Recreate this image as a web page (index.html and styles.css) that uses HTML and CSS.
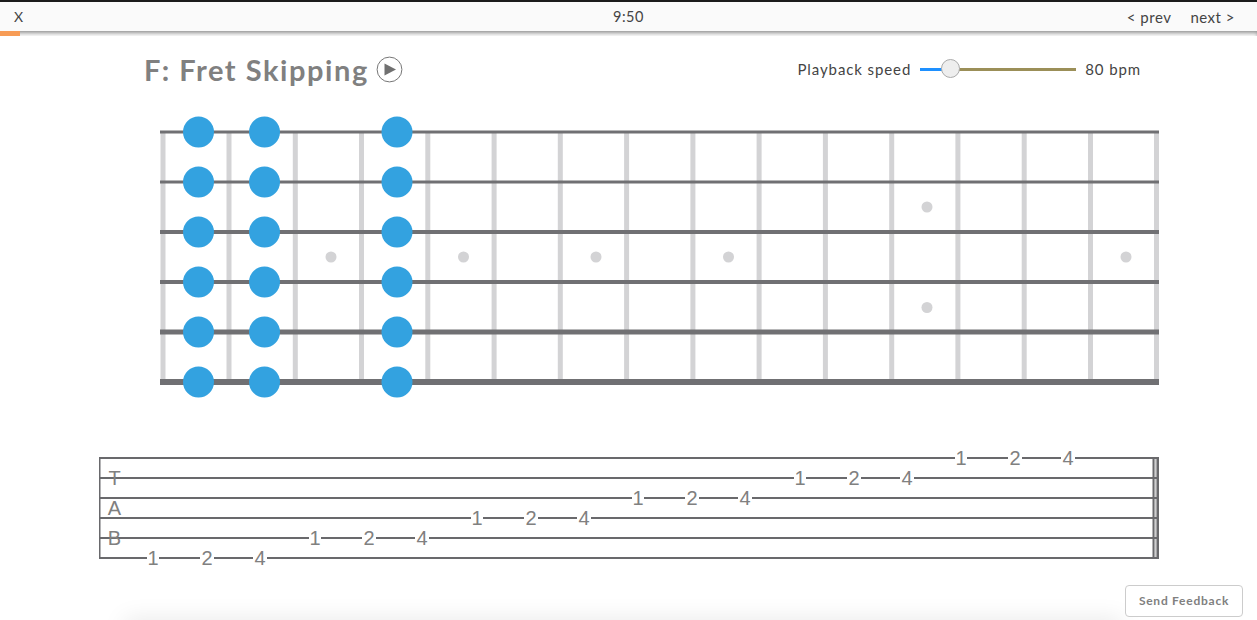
FILE: index.html
```html
<!DOCTYPE html>
<html lang="en">
<head>
  <meta charset="UTF-8">
  <title>F: Fret Skipping</title>
  <link rel="stylesheet" href="styles.css">
</head>
<body>

  <div class="topbar">
    <a class="close">X</a>
    <span class="clock">9:50</span>
    <nav class="pager"><a>&lt; prev</a><a>next &gt;</a></nav>
  </div>
  <div class="progress"><div class="progress-fill"></div></div>

  <div class="lesson-head">
    <h1 class="lesson-title">F: Fret Skipping</h1>
    <svg class="play" width="27" height="27" viewBox="0 0 27 27">
      <circle cx="13.5" cy="13.5" r="12.4" fill="#fff" stroke="#777" stroke-width="1"/>
      <path d="M8.500 7.500 L20 13.500 L8.500 19.500 Z" fill="#707070"/>
    </svg>
    <div class="speed">
      <span>Playback speed</span>
      <div class="slider">
        <div class="slider-done"></div>
        <div class="slider-rest"></div>
        <div class="slider-thumb"></div>
      </div>
      <span>80 bpm</span>
    </div>
  </div>

  <svg class="fretboard" width="1020" height="290" viewBox="150 110 1020 290">
    <g fill="#d3d3d5">
      <rect x="160.5" y="132" width="5" height="250"/>
      <rect x="226.5" y="132" width="5" height="250"/>
      <rect x="292.8" y="132" width="5" height="250"/>
      <rect x="359" y="132" width="5" height="250"/>
      <rect x="425.3" y="132" width="5" height="250"/>
      <rect x="491.6" y="132" width="5" height="250"/>
      <rect x="557.8" y="132" width="5" height="250"/>
      <rect x="624.1" y="132" width="5" height="250"/>
      <rect x="690.4" y="132" width="5" height="250"/>
      <rect x="756.6" y="132" width="5" height="250"/>
      <rect x="822.9" y="132" width="5" height="250"/>
      <rect x="889.2" y="132" width="5" height="250"/>
      <rect x="955.4" y="132" width="5" height="250"/>
      <rect x="1021.7" y="132" width="5" height="250"/>
      <rect x="1088" y="132" width="5" height="250"/>
      <rect x="1154" y="132" width="5" height="250"/>
    </g>
    <g fill="#d3d3d5">
      <circle cx="331" cy="257" r="5.5"/>
      <circle cx="463.5" cy="257" r="5.5"/>
      <circle cx="596" cy="257" r="5.5"/>
      <circle cx="728.5" cy="257" r="5.5"/>
      <circle cx="927" cy="207" r="5.5"/>
      <circle cx="927" cy="307.500" r="5.5"/>
      <circle cx="1126" cy="257" r="5.5"/>
    </g>
    <g fill="#707073">
      <rect x="160" y="130.500" width="999" height="3"/>
      <rect x="160" y="180.500" width="999" height="3"/>
      <rect x="160" y="230" width="999" height="4"/>
      <rect x="160" y="280" width="999" height="4"/>
      <rect x="160" y="329.500" width="999" height="5"/>
      <rect x="160" y="379" width="999" height="6"/>
    </g>
    <g fill="#33a2e0">
      <circle cx="198.500" cy="132" r="15.500"/>
      <circle cx="264.500" cy="132" r="15.500"/>
      <circle cx="397" cy="132" r="15.500"/>
      <circle cx="198.500" cy="182" r="15.500"/>
      <circle cx="264.500" cy="182" r="15.500"/>
      <circle cx="397" cy="182" r="15.500"/>
      <circle cx="198.500" cy="232" r="15.500"/>
      <circle cx="264.500" cy="232" r="15.500"/>
      <circle cx="397" cy="232" r="15.500"/>
      <circle cx="198.500" cy="282" r="15.500"/>
      <circle cx="264.500" cy="282" r="15.500"/>
      <circle cx="397" cy="282" r="15.500"/>
      <circle cx="198.500" cy="332" r="15.500"/>
      <circle cx="264.500" cy="332" r="15.500"/>
      <circle cx="397" cy="332" r="15.500"/>
      <circle cx="198.500" cy="382" r="15.500"/>
      <circle cx="264.500" cy="382" r="15.500"/>
      <circle cx="397" cy="382" r="15.500"/>
    </g>
  </svg>

  <svg class="tab" width="1080" height="130" viewBox="90 445 1080 130">
    <rect x="1154.500" y="457" width="2" height="102" fill="#cfcfcf"/>
    <g fill="#69696c">
      <rect x="99" y="457" width="1060" height="2"/>
      <rect x="99" y="477" width="1060" height="2"/>
      <rect x="99" y="497" width="1060" height="2"/>
      <rect x="99" y="517" width="1060" height="2"/>
      <rect x="99" y="537" width="1060" height="2"/>
      <rect x="99" y="557" width="1060" height="2"/>
      <rect x="99" y="457" width="1.500" height="102"/>
      <rect x="1152.500" y="457" width="2" height="102"/>
      <rect x="1156.500" y="457" width="2.500" height="102"/>
    </g>
    <g class="tab-clef">
      <text x="114.500" y="485">T</text>
      <text x="114.500" y="515">A</text>
      <text x="114.500" y="545">B</text>
    </g>
    <g fill="#fff">
      <rect x="147" y="550" width="12" height="16"/><rect x="200" y="550" width="14" height="16"/><rect x="253" y="550" width="14" height="16"/>
      <rect x="309" y="530" width="12" height="16"/><rect x="362" y="530" width="14" height="16"/><rect x="415" y="530" width="14" height="16"/>
      <rect x="471" y="510" width="12" height="16"/><rect x="524" y="510" width="14" height="16"/><rect x="577" y="510" width="14" height="16"/>
      <rect x="632" y="490" width="12" height="16"/><rect x="685" y="490" width="14" height="16"/><rect x="738" y="490" width="14" height="16"/>
      <rect x="794" y="470" width="12" height="16"/><rect x="847" y="470" width="14" height="16"/><rect x="900" y="470" width="14" height="16"/>
      <rect x="955" y="450" width="12" height="16"/><rect x="1008" y="450" width="14" height="16"/><rect x="1061" y="450" width="14" height="16"/>
    </g>
    <g class="tab-notes">
      <text x="153" y="565">1</text><text x="207" y="565">2</text><text x="260" y="565">4</text>
      <text x="315" y="545">1</text><text x="369" y="545">2</text><text x="422" y="545">4</text>
      <text x="477" y="525">1</text><text x="531" y="525">2</text><text x="584" y="525">4</text>
      <text x="638" y="505">1</text><text x="692" y="505">2</text><text x="745" y="505">4</text>
      <text x="800" y="485">1</text><text x="854" y="485">2</text><text x="907" y="485">4</text>
      <text x="961" y="465">1</text><text x="1015" y="465">2</text><text x="1068" y="465">4</text>
    </g>
  </svg>

  <div class="bottom-fade"></div>
  <button class="feedback">Send Feedback</button>

</body>
</html>
```

FILE: styles.css
```css
html, body {
  height: 100%;
}

body {
  margin: 0;
  background: #fff;
  font-family: 'Lato', sans-serif;
  color: #444;
  overflow: hidden;
  position: relative;
}

.topbar {
  display: grid;
  grid-template-columns: 1fr auto 1fr;
  align-items: center;
  height: 29px;
  padding: 0 14px;
  background: #fafafa;
  border-top: 2px solid #1c1c1c;
  font-size: 15px;
  letter-spacing: 0.5px;
  color: #444;
}

.close {
  font-size: 14px;
}

.clock {
  font-size: 14.5px;
}

.pager {
  display: flex;
  justify-content: flex-end;
  gap: 19px;
  margin-right: 8px;
}

.progress {
  height: 5px;
  box-shadow: inset 0 3px 4px -1px rgba(0,0,0,0.45);
}

.progress-fill {
  width: 20px;
  height: 5px;
  background: #f79c56;
}

.lesson-head {
  display: flex;
  align-items: center;
  height: 66px;
  padding: 0 116px 0 144px;
}

.lesson-title {
  margin: 0 7px 0 0;
  font-size: 29px;
  font-weight: 700;
  letter-spacing: 1.55px;
  color: #808080;
  opacity: 0.999;
}

.speed {
  display: flex;
  align-items: center;
  gap: 9px;
  margin-left: auto;
  font-size: 15px;
  letter-spacing: 0.9px;
  color: #444;
  opacity: 0.999;
}

.slider {
  display: flex;
  align-items: center;
  width: 156px;
  position: relative;
}

.slider-done {
  width: 30px;
  height: 3px;
  background: #1e90ff;
}

.slider-rest {
  flex: 1;
  height: 3px;
  background: #9b8f58;
}

.slider-thumb {
  position: absolute;
  left: 21px;
  top: -9px;
  width: 17px;
  height: 17px;
  border: 1px solid #aaa;
  border-radius: 50%;
  background: #eee;
}

.fretboard {
  display: block;
  margin: 8px 0 0 150px;
}

.tab {
  display: block;
  margin: 45px 0 0 90px;
}

.tab-clef,
.tab-notes {
  opacity: 0.999;
}

.tab-clef text,
.tab-notes text {
  font-family: 'Liberation Sans', Arial, sans-serif;
  font-size: 20px;
  fill: #808080;
  text-anchor: middle;
}

.bottom-fade {
  position: absolute;
  left: 125px;
  right: 135px;
  bottom: -20px;
  height: 20px;
  box-shadow: 0 0 24px rgba(0,0,0,0.1);
}

.feedback {
  position: absolute;
  right: 14px;
  bottom: 3px;
  width: 118px;
  height: 32px;
  padding: 0 0 2px;
  background: #fff;
  border: 1px solid #ccc;
  border-radius: 4px;
  font-family: 'Lato', sans-serif;
  font-size: 12px;
  font-weight: 700;
  letter-spacing: 0.75px;
  color: #808080;
}
```
